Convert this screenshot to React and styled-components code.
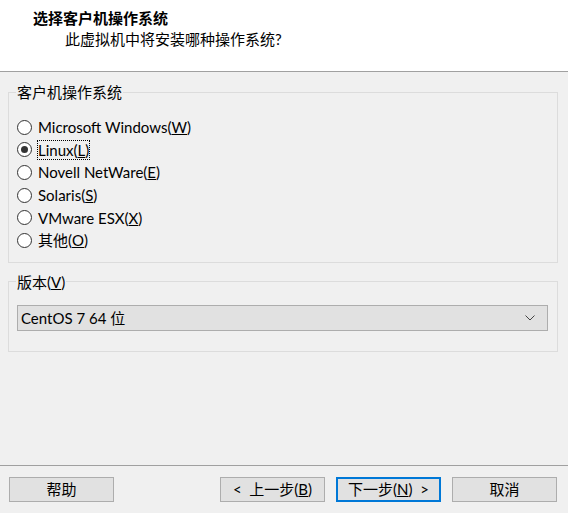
import React, { useState } from "react";
import styled, { createGlobalStyle } from "styled-components";

const Global = createGlobalStyle`
  html, body { margin: 0; padding: 0; background: #f0f0f0; }
  body {
    font-family: "Lato", "Noto Sans CJK SC", sans-serif;
    font-size: 15px;
    color: #000;
  }
`;

const osList = [
  { label: "Microsoft Windows", key: "W" },
  { label: "Linux", key: "L" },
  { label: "Novell NetWare", key: "E" },
  { label: "Solaris", key: "S" },
  { label: "VMware ESX", key: "X" },
  { label: "其他", key: "O" },
];

export default function App() {
  const [os, setOs] = useState("Linux");

  return (
    <Wizard>
      <Global />
      <Header>
        <Title>选择客户机操作系统</Title>
        <Subtitle>此虚拟机中将安装哪种操作系统?</Subtitle>
      </Header>

      <Body>
        <Group>
          <Legend>客户机操作系统</Legend>
          <RadioList>
            {osList.map((o) => (
              <RadioRow key={o.key} onClick={() => setOs(o.label)}>
                <RadioDot checked={os === o.label} />
                <RadioLabel focused={os === o.label}>
                  {o.label}(<u>{o.key}</u>)
                </RadioLabel>
              </RadioRow>
            ))}
          </RadioList>
        </Group>

        <Group gap>
          <Legend>
            版本(<u>V</u>)
          </Legend>
          <Select>
            <span>CentOS 7 64 位</span>
            <svg width="10" height="6" viewBox="0 0 10 6">
              <path d="M0.5 0.5 L5 5 L9.5 0.5" fill="none" stroke="#444" strokeWidth="1" />
            </svg>
          </Select>
        </Group>
      </Body>

      <Footer>
        <Button>帮助</Button>
        <Spacer />
        <Button>
          &lt;&nbsp; 上一步(<u>B</u>)
        </Button>
        <Button primary>
          下一步(<u>N</u>)&nbsp; &gt;
        </Button>
        <Button>取消</Button>
      </Footer>
    </Wizard>
  );
}

const Wizard = styled.div`
  width: 568px;
  height: 513px;
  display: flex;
  flex-direction: column;
  background: #f0f0f0;
  overflow: hidden;
`;

const Header = styled.div`
  height: 72px;
  box-sizing: border-box;
  background: #fff;
  border-bottom: 1px solid #a0a0a0;
  padding: 8px 0 0 33px;
  line-height: 21px;
`;

const Title = styled.div`
  font-weight: bold;
  font-size: 15px;
`;

const Subtitle = styled.div`
  padding-left: 32px;
`;

const Body = styled.div`
  flex: 1;
  padding: 10px 10px 0 8px;
`;

const Group = styled.fieldset`
  margin: ${(p) => (p.gap ? "9px" : "0")} 0 0 0;
  padding: 2px 8px ${(p) => (p.gap ? "20px" : "10px")} 8px;
  border: 1px solid #dcdcdc;
  min-width: 0;
`;

const Legend = styled.legend`
  padding: 0 1px;
  margin-left: -1px;
  line-height: 20px;
`;

const RadioList = styled.div`
  display: flex;
  flex-direction: column;
  padding-top: 12px;
`;

const RadioRow = styled.label`
  display: flex;
  align-items: center;
  height: 22.6px;
  gap: 6px;
  cursor: default;
`;

const RadioDot = styled.span`
  width: 15px;
  height: 15px;
  box-sizing: border-box;
  border-radius: 50%;
  border: 1px solid #333;
  background: #fff;
  display: flex;
  align-items: center;
  justify-content: center;
  &::after {
    content: "";
    display: ${(p) => (p.checked ? "block" : "none")};
    width: 7px;
    height: 7px;
    border-radius: 50%;
    background: #333;
  }
`;

const RadioLabel = styled.span`
  line-height: 18px;
  outline: ${(p) => (p.focused ? "1px dotted #000" : "none")};
  outline-offset: 0;
`;

const Select = styled.div`
  margin: 11px 1px 0 0;
  height: 26px;
  box-sizing: border-box;
  border: 1px solid #adadad;
  background: #e1e1e1;
  display: flex;
  align-items: center;
  justify-content: space-between;
  padding: 0 12px 0 3px;
`;

const Footer = styled.div`
  height: 48px;
  box-sizing: border-box;
  border-top: 1px solid #a0a0a0;
  display: flex;
  align-items: flex-start;
  gap: 11px;
  padding: 11px 11px 0 9px;
`;

const Spacer = styled.div`
  flex: 1;
`;

const Button = styled.button`
  width: 105px;
  height: 25px;
  box-sizing: border-box;
  background: #e1e1e1;
  border: ${(p) => (p.primary ? "2px solid #0078d7" : "1px solid #adadad")};
  font: inherit;
  color: #000;
  padding: 0;
  line-height: 1;
`;
